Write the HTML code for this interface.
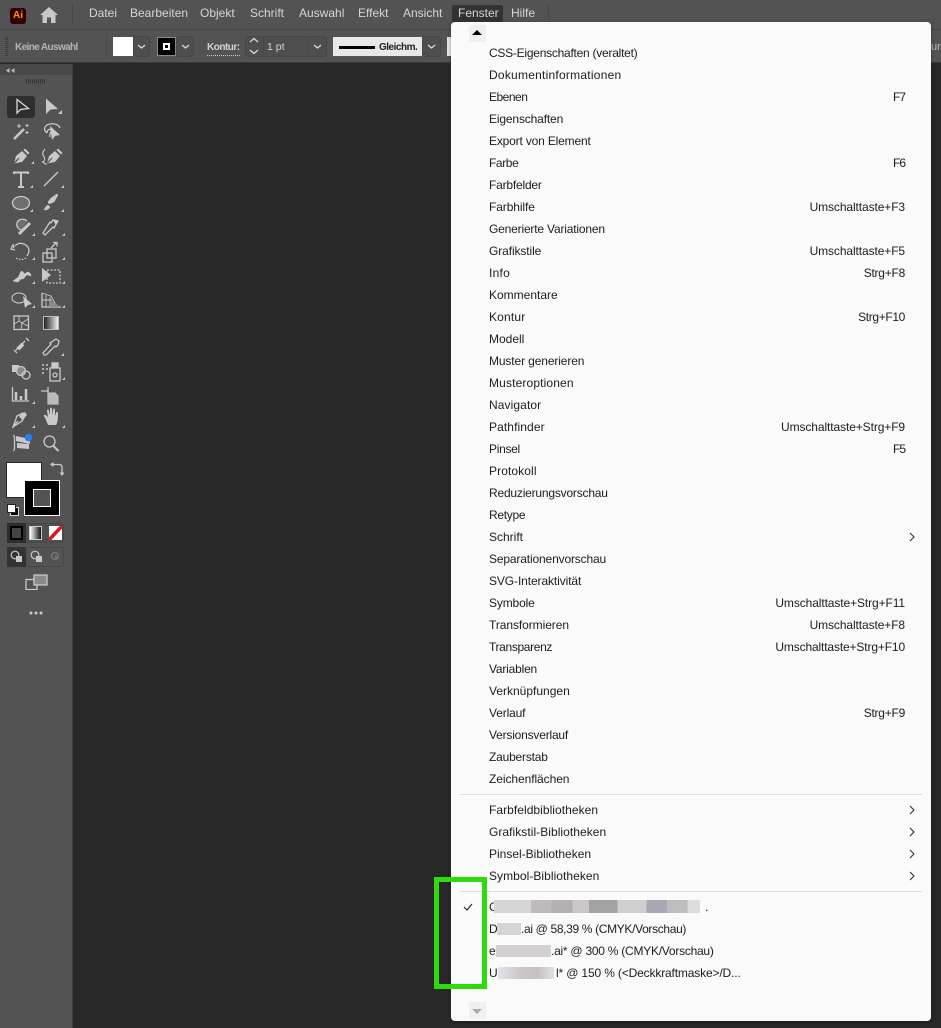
<!DOCTYPE html>
<html><head><meta charset="utf-8"><style>
html,body{margin:0;padding:0;width:941px;height:1028px;overflow:hidden;background:#282828}
body{position:relative;font-family:"Liberation Sans",sans-serif}
.a{position:absolute}
.m{position:absolute;font-size:12px;color:#d6d6d6;top:6px;line-height:14px;white-space:nowrap}
.i{position:absolute;left:489px;font-size:12px;line-height:16px;color:#1c1c1c;white-space:nowrap}
.s{position:absolute;right:36px;font-size:12px;line-height:16px;color:#1c1c1c;white-space:nowrap;letter-spacing:-.1px}
.b{position:absolute;background:#4e4e4e;border-radius:3px;border:1px solid #474747;box-sizing:border-box}
</style></head><body>
<div class="a" style="left:0;top:0;width:941px;height:29px;background:#535353"></div>
<div class="a" style="left:0;top:29px;width:941px;height:34px;background:#535353;border-top:1px solid #474747;border-bottom:1px solid #3a3a3a;box-sizing:border-box"></div>
<div class="a" style="left:0;top:64px;width:72px;height:964px;background:#535353"></div>
<div class="a" style="left:72px;top:64px;width:1px;height:964px;background:#3e3e3e"></div>
<div class="a" style="left:0;top:64px;width:72px;height:11px;background:#484848"></div>

<div class="a" style="left:10px;top:8px;width:16px;height:16px;background:#330000;border-radius:3px;color:#ff9a00;font-size:10px;font-weight:bold;line-height:16px;text-align:center">Ai</div>
<svg class="a" style="left:39px;top:6px" width="20" height="18"><path d="M10 1 L19 9 L16.5 9 L16.5 17 L12 17 L12 11.500 L8 11.500 L8 17 L3.500 17 L3.500 9 L1 9 Z" fill="#c8c8c8"/></svg>
<div class="a" style="left:72px;top:4px;width:1px;height:20px;background:#484848"></div>
<span class="m" style="left:89px">Datei</span>
<span class="m" style="left:130px">Bearbeiten</span>
<span class="m" style="left:200px">Objekt</span>
<span class="m" style="left:250px">Schrift</span>
<span class="m" style="left:299px">Auswahl</span>
<span class="m" style="left:358px">Effekt</span>
<span class="m" style="left:403px">Ansicht</span>
<div class="a" style="left:452px;top:5px;width:51px;height:17px;background:#323232;border-radius:2px 2px 0 0"></div>
<span class="m" style="left:458px">Fenster</span>
<span class="m" style="left:511px">Hilfe</span>
<div class="a" style="left:548px;top:4px;width:1px;height:18px;background:#484848"></div>

<div class="a" style="left:5px;top:37px;width:3px;height:20px;background:repeating-linear-gradient(#3c3c3c 0 1px,#535353 1px 2px)"></div>
<div class="a" style="left:15px;top:41px;font-size:10px;font-weight:bold;color:#b4b4b4;line-height:14px;white-space:nowrap;letter-spacing:-.62px">Keine Auswahl</div>
<div class="a" style="left:106px;top:34px;width:1px;height:24px;background:#484848"></div>
<div class="a" style="left:113px;top:37px;width:20px;height:19px;background:#fff"></div>
<div class="b" style="left:133px;top:36px;width:17px;height:21px"></div>
<div class="a" style="left:157px;top:37px;width:19px;height:19px;background:#000;border:1px solid #888;box-sizing:border-box"></div>
<div class="a" style="left:163px;top:43px;width:7px;height:7px;border:2px solid #fff;box-sizing:border-box"></div>
<div class="b" style="left:176px;top:36px;width:18px;height:21px"></div>
<div class="a" style="left:207px;top:41px;font-size:10px;font-weight:bold;color:#d4d4d4;line-height:14px;border-bottom:1px dotted #ccc;letter-spacing:-.5px">Kontur:</div>
<div class="b" style="left:245px;top:36px;width:82px;height:21px"></div>
<div class="a" style="left:263px;top:37px;width:1px;height:19px;background:#474747"></div>
<div class="a" style="left:308px;top:37px;width:1px;height:19px;background:#474747"></div>
<div class="a" style="left:267px;top:40px;font-size:10.500px;color:#d8d8d8;line-height:14px">1 pt</div>
<div class="a" style="left:333px;top:37px;width:89px;height:19px;background:#e8e8e8"></div>
<div class="a" style="left:339px;top:46px;width:36px;height:3px;background:#000"></div>
<div class="a" style="left:379px;top:41px;font-size:10px;font-weight:bold;color:#222;line-height:14px;letter-spacing:-.5px">Gleichm.</div>
<div class="b" style="left:422px;top:36px;width:19px;height:21px"></div>
<div class="a" style="left:447px;top:37px;width:4px;height:19px;background:#e8e8e8"></div>
<svg class="a" style="left:0;top:29px" width="450" height="34" fill="none" stroke="#d8d8d8" stroke-width="1.300">
<path d="M138 16l3.500 3 3.500-3M182 16l3.500 3 3.500-3M314 16l3.500 3 3.500-3M428 16l3.500 3 3.500-3M250 13l4-3.500 4 3.500M250 21l4 3.500 4-3.500"/></svg>
<div class="a" style="left:931px;top:40px;width:10px;font-size:11px;color:#bbb;line-height:14px;overflow:hidden">un</div>

<svg class="a" style="left:0;top:64px" width="72" height="30" fill="none">
<path d="M6 6.500l3.500-2.500v5zM11 6.500l3.500-2.500v5z" fill="#bbb"/>
<path d="M26.500 15v4.500M28.500 15v4.500M30.500 15v4.500M32.500 15v4.500M34.500 15v4.500M36.500 15v4.500M38.500 15v4.500M40.500 15v4.500M42.500 15v4.500M44.500 15v4.500" stroke="#363636" stroke-width="1"/>
</svg>
<div class="a" style="left:7px;top:96px;width:28px;height:22px;background:#2e2e2e;border-radius:3px"></div>

<svg class="a" style="left:0;top:0" width="72" height="640" fill="none" stroke="#c9c9c9" stroke-width="1.300">
<!-- row 1 -->
<path d="M17 99.500V113l3.500-3.500 8-1z" stroke="#d8d8d8"/>
<path d="M46 98.500V114l4.500-4.500 7.500-.5z" fill="#c9c9c9" stroke="none"/>
<!-- row 2 -->
<path d="M14 139l10-10" stroke-width="2.500"/>
<path d="M19 124v4M17 126h4M27 124v3M25.500 125.500h3M27 131v3M25.500 132.500h3" stroke-width="1"/>
<path d="M47 133c-4-3-3-8 3-9 5-1 9 1 10 4M47 133c0-4 4-5 4-2s-2 3-1 6" />
<path d="M50 126l2 14 3-4 5-1z" fill="#c9c9c9" stroke="none"/>
<!-- row 3 -->
<path d="M14 163.500l2-7.500 6-5 5 5-5 6z" fill="#c9c9c9" stroke="none"/><path d="M23.500 150l1.500-1.500 4.500 4.500-1.500 1.500z" fill="#c9c9c9" stroke="none"/><path d="M14.500 163l4.500-5" stroke="#535353"/>
<path d="M47 163.500l2-7.500 6-5 5 5-5 6z" fill="#c9c9c9" stroke="none"/><path d="M56.500 150l1.500-1.500 4.500 4.500-1.500 1.500z" fill="#c9c9c9" stroke="none"/><path d="M47.500 163l4.500-5" stroke="#535353"/>
<path d="M45 149c-3 3-3 5-1.500 7s2 5-1 6l4 2.500" stroke-width="1.100"/>
<!-- row 4 -->
<path d="M14 174v-1.500h14v1.500M21 173v14M18 187h6" stroke-width="2"/>
<path d="M44 186l14-14" />
<!-- row 5 -->
<ellipse cx="21" cy="203" rx="8.500" ry="6.500" fill="#6e6e6e"/>
<path d="M44 210c3 0 5-1 6-3l-2-2c-2 1-3 3-4 5zM49 204l5-2 4-7-1-1-6 4-3 4z" fill="#c9c9c9" stroke-width=".5"/>
<!-- row 6 -->
<path d="M27 221c-3-3-9-2-10 2s2 7 5 7" fill="#6e6e6e"/><path d="M19 234l11-11" stroke-width="3"/>
<path d="M43 233l2 2 8-8 1 1 4-7-5-1-2 3-1-1z"/><path d="M53 220l5 .5-2 5z" fill="#c9c9c9" stroke="none"/>
<!-- row 7 -->
<path d="M14 248l-1-3-2 4 4 1M15 246c3-4 9-3 12 0 3 3 2 7 0 10" /><path d="M26 258c-3 2-7 2-10 0" stroke-dasharray="1.500 1.500"/>
<rect x="43" y="253" width="9" height="9"/><rect x="47" y="249" width="9" height="9"/><path d="M51 248l5-5M53 242.500h4v4" />
<!-- row 8 -->
<path d="M13 281l4-3c3-1 2-6 5-7l3 3 2-2c3 0 4 2 4 4l-3-1c-3 0-3 4-6 4s-2 3-5 3z" fill="#c9c9c9" stroke-width=".5"/>
<rect x="47" y="270" width="13" height="13" stroke-dasharray="2 1.500"/><path d="M42 268v14l9-7z" fill="#c9c9c9" stroke="none"/>
<!-- row 9 -->
<ellipse cx="19" cy="298" rx="7" ry="5" stroke-width="1.100"/><path d="M23 296l2 12 3-3 4-1z" fill="#c9c9c9" stroke="none"/>
<path d="M42 293v14h19" /><path d="M42 293l9 3 5 9M46 295v12M50 297v10M42 300h10" stroke-width=".9"/><path d="M50 300l8 5v2h-8z" fill="#8c8c8c" stroke="none"/>
<!-- row 10 -->
<rect x="14" y="316" width="14.500" height="13.500"/><path d="M14 324l5-3 3 2 6-4M19 316v5M22 323l-1 7M22 323l6 3" stroke-width=".9"/>
</svg>
<div class="a" style="left:43px;top:316px;width:16px;height:14px;background:linear-gradient(90deg,#222,#eee);border:1px solid #bbb;box-sizing:border-box"></div>
<svg class="a" style="left:0;top:0" width="72" height="640" fill="none" stroke="#c9c9c9" stroke-width="1.300">
<!-- row 11 -->
<path d="M14 350l3 3M26 338l3 3M16 350l9-9" /><path d="M18 349l5-5" stroke-width="4"/>
<path d="M44 355l-1-2 8-9-1-1 3-2 3-2 3 2-1 4-2 2-1-1-9 9z"/>
<!-- row 12 -->
<rect x="12" y="365" width="7" height="7" fill="#c9c9c9" stroke="none"/><circle cx="21" cy="371" r="4.500" fill="#8a8a8a"/><circle cx="26" cy="375" r="4"/>
<path d="M42 365h2M46 365h2M42 369h2M46 369h2M42 373h2" stroke-width="1.500"/><rect x="50" y="368" width="10" height="13"/><rect x="52" y="363" width="6" height="4" fill="#c9c9c9"/><circle cx="55" cy="375" r="2"/>
<!-- row 13 -->
<path d="M12.500 387v14h16.500"/><path d="M16 392v8M21 396v4M26 389v11" stroke-width="2.500"/>
<path d="M41 391h7M48 387v6"/><path d="M48 393h7l3 3v8h-10z" fill="#bbb" stroke="#bbb"/>
<!-- row 14 -->
<path d="M13 427l4-11 6-3 2 3-3 5z"/><path d="M19 416l6-4 2 3-5 5z" fill="#c9c9c9" stroke="none"/><path d="M13 427l5-6"/>
<path d="M46 420c-1-3-3-4-2-5s3 1 4 2l-1-6c0-2 2-2 2 0l1 4v-6c0-2 2-2 2 0v6l1-5c0-2 2-2 2 0v6l1-3c1-2 2-1 2 0 0 4 0 9-2 12h-8z" fill="#c9c9c9" stroke="none"/>
<!-- row 15 -->
<path d="M13.500 435l1 2v12l-1 2"/><path d="M16 436l14 3v5l-14-3zM17 443l12 1v5l-12-1z" fill="#c9c9c9" stroke="none"/>
<circle cx="28.500" cy="437.500" r="3.800" fill="#2680eb" stroke="none"/>
<circle cx="49.500" cy="441.500" r="5.500"/><path d="M53.500 446l5 5" stroke-width="2"/>
</svg>
<svg class="a" style="left:0;top:0" width="72" height="640" fill="#c9c9c9">
<path d="M62 114v-4l-4 4zM34 164v-3l-3 3zM33 188v-3l-3 3zM64 188v-3l-3 3zM33 212v-3l-3 3zM64 212v-3l-3 3zM35 236v-3l-3 3zM65 236v-3l-3 3zM35 260v-3l-3 3zM65 260v-3l-3 3zM35 284v-3l-3 3zM65 284v-3l-3 3zM35 308v-3l-3 3zM65 308v-3l-3 3zM64 356v-3l-3 3zM65 380v-3l-3 3zM35 404v-3l-3 3zM35 428v-3l-3 3zM65 428v-3l-3 3z"/>
</svg>
<svg class="a" style="left:50px;top:462px" width="14" height="14"><path d="M3 2.500h6c2 0 3 1 3 3v5" fill="none" stroke="#c9c9c9" stroke-width="1.300"/><path d="M0 2.500l3.500-2.500v5zM12 14l-2.500-3.500h5z" fill="#c9c9c9"/></svg>
<div class="a" style="left:6px;top:462px;width:36px;height:36px;background:#fff;border:1px solid #2a2a2a;box-sizing:border-box"></div>
<div class="a" style="left:24px;top:480px;width:36px;height:36px;background:#000;border:1px solid #fff;box-sizing:border-box"></div>
<div class="a" style="left:33px;top:489px;width:18px;height:18px;background:#535353;border:1px solid #fff;box-sizing:border-box"></div>
<div class="a" style="left:10px;top:507px;width:7px;height:7px;background:#000;border:1px solid #ddd"></div>
<div class="a" style="left:7px;top:504px;width:7px;height:7px;background:#fff;border:1px solid #222"></div>
<div class="b" style="left:7px;top:523px;width:57px;height:20px"></div>
<div class="a" style="left:7px;top:523px;width:19px;height:20px;background:#2e2e2e"></div>
<div class="a" style="left:10px;top:526px;width:13px;height:14px;background:#444;border:2px solid #000;box-sizing:border-box"></div>
<div class="a" style="left:29px;top:526px;width:13px;height:14px;background:linear-gradient(90deg,#fff,#111);border:1px solid #ccc;box-sizing:border-box"></div>
<svg class="a" style="left:49px;top:526px" width="13" height="14"><rect width="13" height="14" fill="#fff"/><path d="M0 14L13 0" stroke="#e1141c" stroke-width="3.500"/></svg>
<div class="b" style="left:7px;top:547px;width:57px;height:20px;background:#535353"></div>
<div class="a" style="left:7px;top:547px;width:19px;height:20px;background:#333"></div>
<svg class="a" style="left:7px;top:547px" width="57" height="20" fill="none" stroke="#c9c9c9" stroke-width="1.200">
<circle cx="8" cy="8" r="3.800"/><rect x="9" y="9" width="6" height="6" fill="#c9c9c9" stroke="none"/>
<circle cx="28" cy="8" r="3.800"/><rect x="29" y="9" width="6" height="6" fill="#c9c9c9" stroke="none"/>
<circle cx="48" cy="9" r="3.500" stroke="#777"/><circle cx="49" cy="10" r="1.500" fill="#777" stroke="none"/></svg>
<svg class="a" style="left:25px;top:574px" width="24" height="16" fill="none" stroke="#c9c9c9" stroke-width="1.300"><rect x="1" y="5.500" width="11" height="10"/><rect x="9" y="1" width="13" height="10" fill="#8a8a8a"/></svg>
<svg class="a" style="left:29px;top:610px" width="16" height="6" fill="#c9c9c9"><circle cx="2" cy="3" r="1.500"/><circle cx="7" cy="3" r="1.500"/><circle cx="12" cy="3" r="1.500"/></svg>

<div class="a" style="left:451px;top:22px;width:480px;height:999px;background:#fafafa;border-radius:4px;box-shadow:0 1px 4px rgba(0,0,0,.35)"></div>
<div class="a" style="left:469px;top:25px;width:17px;height:17px;background:#f0f0f0"></div>
<div class="a" style="left:472px;top:30px;width:0;height:0;border-left:5px solid transparent;border-right:5px solid transparent;border-bottom:5px solid #000"></div>
<div class="a" style="left:469px;top:1002px;width:17px;height:17px;background:#f0f0f0"></div>
<div class="a" style="left:472px;top:1009px;width:0;height:0;border-left:5px solid transparent;border-right:5px solid transparent;border-top:5px solid #aaa"></div>

<div class="i" style="top:45px;letter-spacing:-.25px">CSS-Eigenschaften (veraltet)</div>
<div class="i" style="top:67px;letter-spacing:.24px">Dokumentinformationen</div>
<div class="i" style="top:89px;letter-spacing:-.5px">Ebenen</div><div class="s" style="top:89px;letter-spacing:-1px">F7</div>
<div class="i" style="top:111px;letter-spacing:-.15px">Eigenschaften</div>
<div class="i" style="top:133px;letter-spacing:-.17px">Export von Element</div>
<div class="i" style="top:155px;letter-spacing:-.4px">Farbe</div><div class="s" style="top:155px;letter-spacing:-1px">F6</div>
<div class="i" style="top:177px;letter-spacing:-.2px">Farbfelder</div>
<div class="i" style="top:199px;letter-spacing:-.1px">Farbhilfe</div><div class="s" style="top:199px">Umschalttaste+F3</div>
<div class="i" style="top:221px;letter-spacing:-.18px">Generierte Variationen</div>
<div class="i" style="top:243px;letter-spacing:-.1px">Grafikstile</div><div class="s" style="top:243px">Umschalttaste+F5</div>
<div class="i" style="top:265px;letter-spacing:.25px">Info</div><div class="s" style="top:265px;letter-spacing:-.25px">Strg+F8</div>
<div class="i" style="top:287px">Kommentare</div>
<div class="i" style="top:309px;letter-spacing:.17px">Kontur</div><div class="s" style="top:309px;letter-spacing:-.35px">Strg+F10</div>
<div class="i" style="top:331px">Modell</div>
<div class="i" style="top:353px;letter-spacing:-.12px">Muster generieren</div>
<div class="i" style="top:375px;letter-spacing:.14px">Musteroptionen</div>
<div class="i" style="top:397px;letter-spacing:.1px">Navigator</div>
<div class="i" style="top:419px;letter-spacing:.1px">Pathfinder</div><div class="s" style="top:419px">Umschalttaste+Strg+F9</div>
<div class="i" style="top:441px;letter-spacing:-.3px">Pinsel</div><div class="s" style="top:441px;letter-spacing:-1px">F5</div>
<div class="i" style="top:463px;letter-spacing:.1px">Protokoll</div>
<div class="i" style="top:485px;letter-spacing:-.2px">Reduzierungsvorschau</div>
<div class="i" style="top:507px;letter-spacing:-.3px">Retype</div>
<div class="i" style="top:529px">Schrift</div>
<div class="i" style="top:551px;letter-spacing:-.15px">Separationenvorschau</div>
<div class="i" style="top:573px;letter-spacing:-.1px">SVG-Interaktivität</div>
<div class="i" style="top:595px;letter-spacing:-.15px">Symbole</div><div class="s" style="top:595px">Umschalttaste+Strg+F11</div>
<div class="i" style="top:617px;letter-spacing:-.07px">Transformieren</div><div class="s" style="top:617px">Umschalttaste+F8</div>
<div class="i" style="top:639px;letter-spacing:-.35px">Transparenz</div><div class="s" style="top:639px;letter-spacing:-.14px">Umschalttaste+Strg+F10</div>
<div class="i" style="top:661px;letter-spacing:-.2px">Variablen</div>
<div class="i" style="top:683px">Verknüpfungen</div>
<div class="i" style="top:705px;letter-spacing:-.14px">Verlauf</div><div class="s" style="top:705px;letter-spacing:-.25px">Strg+F9</div>
<div class="i" style="top:727px;letter-spacing:-.2px">Versionsverlauf</div>
<div class="i" style="top:749px;letter-spacing:-.2px">Zauberstab</div>
<div class="i" style="top:771px;letter-spacing:-.07px">Zeichenflächen</div>
<div class="a" style="left:460px;top:794px;width:462px;height:1px;background:#dcdcdc"></div>
<div class="i" style="top:802px;letter-spacing:.05px">Farbfeldbibliotheken</div>
<div class="i" style="top:824px;letter-spacing:.05px">Grafikstil-Bibliotheken</div>
<div class="i" style="top:846px">Pinsel-Bibliotheken</div>
<div class="i" style="top:868px;letter-spacing:.05px">Symbol-Bibliotheken</div>
<div class="a" style="left:460px;top:891px;width:462px;height:1px;background:#dcdcdc"></div>
<svg class="a" style="left:905px;top:530px" width="12" height="356" fill="none" stroke="#333" stroke-width="1.100"><path d="M5 3l4 4-4 4M5 276l4 4-4 4M5 298l4 4-4 4M5 320l4 4-4 4M5 342l4 4-4 4"/></svg>
<svg class="a" style="left:462px;top:901px" width="12" height="12" fill="none" stroke="#222" stroke-width="1.100"><path d="M2 6l3 3 5-6"/></svg>

<div class="i" style="top:899px">C</div>
<div class="a" style="left:494px;top:900px;width:206px;height:13px;background:linear-gradient(90deg,#d6d6d6 0 18%,#c0baba 18% 28%,#b5b0b0 28% 38%,#cbc7c7 38% 46%,#a5a2a4 46% 60%,#cfcfcf 60% 74%,#aaa6b5 74% 84%,#bdbdbd 84% 94%,#dcdcdc 94%)"></div>
<div class="i" style="left:705px;top:899px">.</div>
<div class="i" style="top:921px">D</div>
<div class="a" style="left:497px;top:923px;width:24px;height:12px;background:#d6d4d5"></div>
<div class="i" style="left:521px;top:921px;letter-spacing:-.34px">.ai @ 58,39 % (CMYK/Vorschau)</div>
<div class="i" style="top:943px">e</div>
<div class="a" style="left:496px;top:945px;width:55px;height:12px;background:#d4d0d0"></div>
<div class="i" style="left:551px;top:943px;letter-spacing:-.25px">.ai* @ 300 % (CMYK/Vorschau)</div>
<div class="i" style="top:965px">U</div>
<div class="a" style="left:498px;top:967px;width:56px;height:12px;background:linear-gradient(90deg,#e2e2ea,#cdc6ca 40%,#c6c0c4 70%,#e0e0e0)"></div>
<div class="i" style="left:556px;top:965px;letter-spacing:-.15px">l* @ 150 % (&lt;Deckkraftmaske&gt;/D...</div>

<div class="a" style="left:434px;top:877px;width:53px;height:112px;border:5px solid #2ddc0a;box-sizing:border-box"></div>
</body></html>
